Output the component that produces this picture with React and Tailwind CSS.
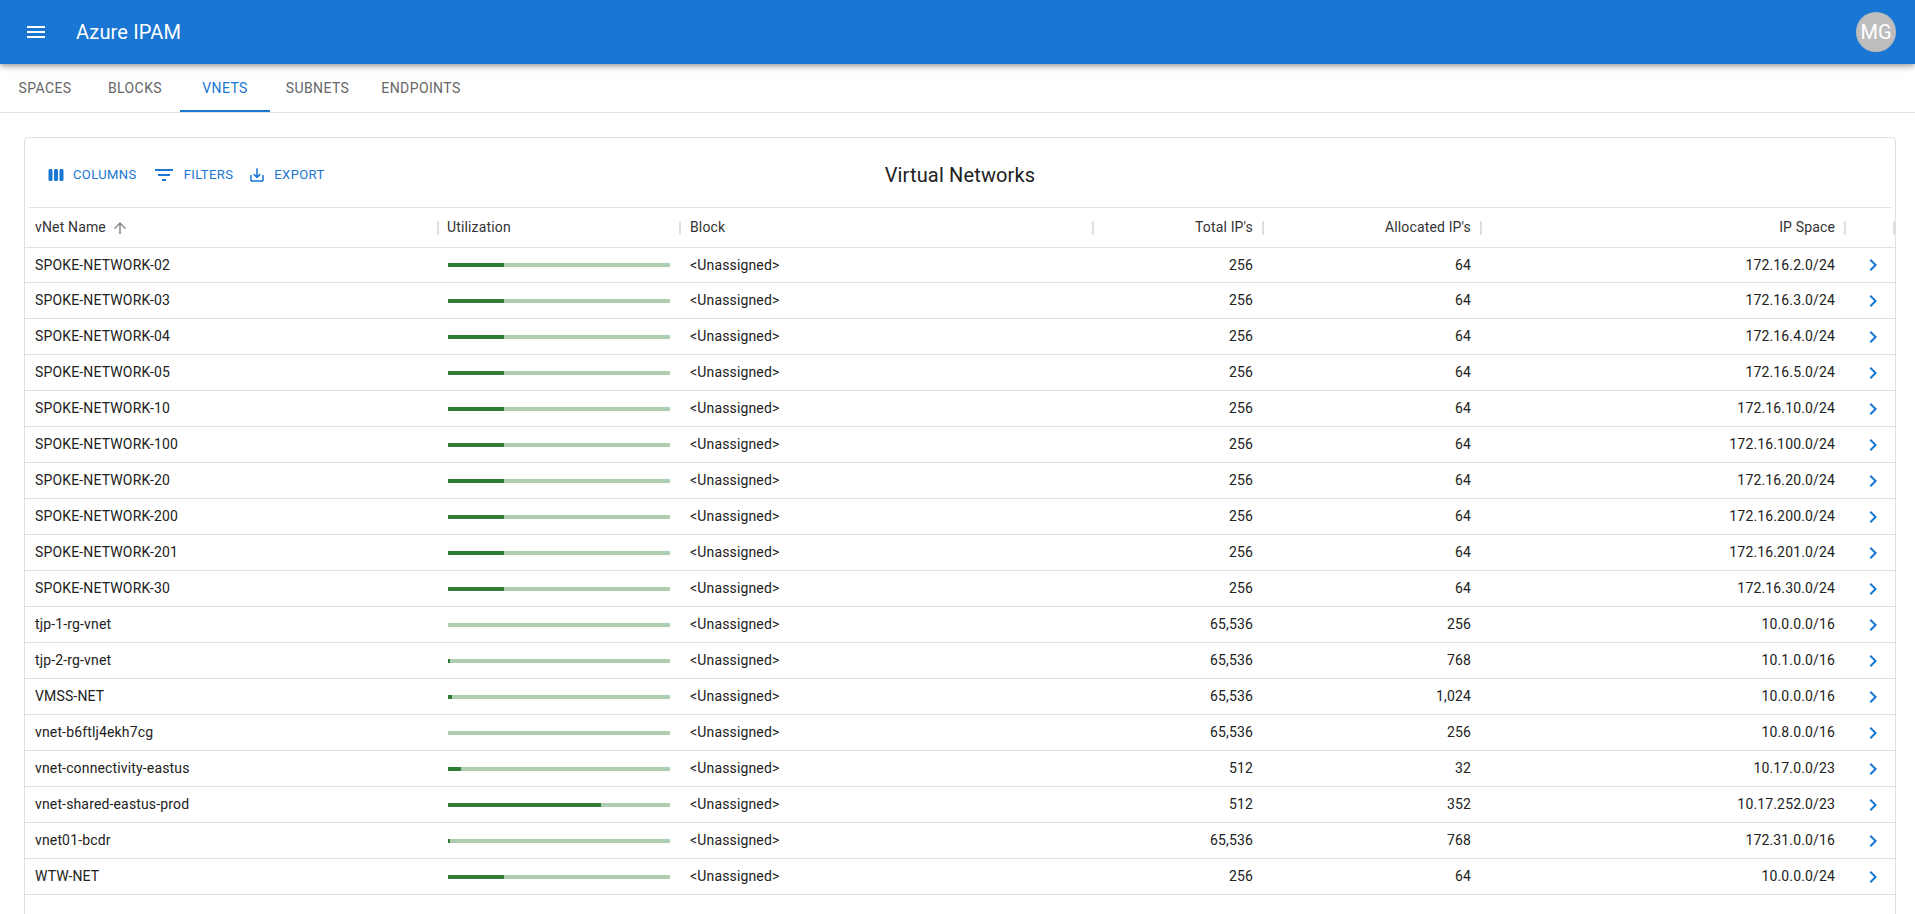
import React from "react";

const rows = [
  ["SPOKE-NETWORK-02", 256, 64, "172.16.2.0/24"],
  ["SPOKE-NETWORK-03", 256, 64, "172.16.3.0/24"],
  ["SPOKE-NETWORK-04", 256, 64, "172.16.4.0/24"],
  ["SPOKE-NETWORK-05", 256, 64, "172.16.5.0/24"],
  ["SPOKE-NETWORK-10", 256, 64, "172.16.10.0/24"],
  ["SPOKE-NETWORK-100", 256, 64, "172.16.100.0/24"],
  ["SPOKE-NETWORK-20", 256, 64, "172.16.20.0/24"],
  ["SPOKE-NETWORK-200", 256, 64, "172.16.200.0/24"],
  ["SPOKE-NETWORK-201", 256, 64, "172.16.201.0/24"],
  ["SPOKE-NETWORK-30", 256, 64, "172.16.30.0/24"],
  ["tjp-1-rg-vnet", 65536, 256, "10.0.0.0/16"],
  ["tjp-2-rg-vnet", 65536, 768, "10.1.0.0/16"],
  ["VMSS-NET", 65536, 1024, "10.0.0.0/16"],
  ["vnet-b6ftlj4ekh7cg", 65536, 256, "10.8.0.0/16"],
  ["vnet-connectivity-eastus", 512, 32, "10.17.0.0/23"],
  ["vnet-shared-eastus-prod", 512, 352, "10.17.252.0/23"],
  ["vnet01-bcdr", 65536, 768, "172.31.0.0/16"],
  ["WTW-NET", 256, 64, "10.0.0.0/24"],
];

const Ico = ({ d, size = 24, className = "" }) => (
  <svg width={size} height={size} viewBox="0 0 24 24" fill="currentColor" className={`shrink-0 ${className}`}>
    <path d={d} />
  </svg>
);

const Sep = () => <span className="w-[2px] h-[14px] bg-[#e0e0e0] shrink-0" />;

const tabs = [
  ["SPACES", "w-[90px]", false],
  ["BLOCKS", "w-[90px]", false],
  ["VNETS", "w-[90px]", true],
  ["SUBNETS", "w-[95px]", false],
  ["ENDPOINTS", "w-[112px]", false],
];

export default function App() {
  return (
    <div className="h-[914px] overflow-hidden bg-white text-[14px] tracking-[0.15px] text-[#212121] font-['Roboto',sans-serif]">
      <header className="relative z-10 h-16 bg-[#1976d2] text-white flex items-center pl-6 pr-[19px] shadow-[0_2px_4px_-1px_rgba(0,0,0,0.2),0_4px_5px_0_rgba(0,0,0,0.14),0_1px_10px_0_rgba(0,0,0,0.12)]">
        <Ico d="M3 18h18v-2H3v2zm0-5h18v-2H3v2zm0-7v2h18V6H3z" />
        <span className="ml-7 text-[20px] font-[450] leading-[32px] tracking-[0.15px]">Azure IPAM</span>
        <span className="ml-auto w-10 h-10 rounded-full bg-[#bdbdbd] flex items-center justify-center text-[20px] tracking-normal">MG</span>
      </header>

      <nav className="h-[49px] flex border-b border-[#e0e0e0]">
        {tabs.map(([t, w, active]) => (
          <div
            key={t}
            className={`${w} h-12 flex items-center justify-center text-[14px] font-[450] tracking-[0.4px] border-y-2 border-t-transparent ${
              active ? "text-[#1976d2] border-b-[#1976d2]" : "text-[#666666] border-b-transparent"
            }`}
          >
            {t}
          </div>
        ))}
      </nav>

      <section className="mt-6 ml-6 mr-[19px] h-[800px] border border-[#e0e0e0] rounded">
        <div className="mx-1 h-[70px] pt-[4px] border-b border-[#e0e0e0] flex items-center">
          <div className="flex-1 flex items-center text-[13px] font-[450] tracking-[0.4px] text-[#1976d2]">
            <Ico size={18} className="ml-[18px]" d="M5.33 20H4c-1.1 0-2-.9-2-2V6c0-1.1.9-2 2-2h1.33c1.1 0 2 .9 2 2v12c0 1.1-.9 2-2 2zM22 18V6c0-1.1-.9-2-2-2h-1.33c-1.1 0-2 .9-2 2v12c0 1.1.9 2 2 2H20c1.1 0 2-.9 2-2zm-7.33 0V6c0-1.1-.9-2-2-2h-1.33c-1.1 0-2 .9-2 2v12c0 1.1.9 2 2 2h1.33c1.1 0 2-.9 2-2z" />
            <span className="ml-2">COLUMNS</span>
            <Ico className="ml-[15px]" d="M10 18h4v-2h-4v2zM3 6v2h18V6H3zm3 7h12v-2H6v2z" />
            <span className="ml-2">FILTERS</span>
            <Ico size={18} className="ml-[15px]" d="M19 12v7H5v-7H3v7c0 1.1.9 2 2 2h14c1.1 0 2-.9 2-2v-7h-2zm-6 .67l2.59-2.58L17 11.5l-5 5-5-5 1.41-1.41L11 12.67V3h2z" />
            <span className="ml-2">EXPORT</span>
          </div>
          <h1 className="text-[20px] font-normal leading-8 tracking-[0.15px] text-[#212121]">Virtual Networks</h1>
          <div className="flex-1" />
        </div>

        <div className="h-10 flex items-center border-b border-[#e0e0e0] text-[#333333]">
          <div className="w-[414px] flex items-center justify-between pl-[10px]">
            <span className="flex items-center">
              vNet Name
              <Ico size={18} className="ml-[5px] text-[#888888]" d="M4 12l1.41 1.41L11 7.83V20h2V7.83l5.58 5.59L20 12l-8-8-8 8z" />
            </span>
            <Sep />
          </div>
          <div className="w-[242px] flex items-center justify-between pl-2">
            <span>Utilization</span>
            <Sep />
          </div>
          <div className="w-[413px] flex items-center justify-between pl-[9px]">
            <span>Block</span>
            <Sep />
          </div>
          <div className="w-[170px] flex items-center justify-end gap-[9px]">
            <span>Total IP's</span>
            <Sep />
          </div>
          <div className="w-[218px] flex items-center justify-end gap-[9px]">
            <span>Allocated IP's</span>
            <Sep />
          </div>
          <div className="w-[364px] flex items-center justify-end gap-[9px]">
            <span>IP Space</span>
            <Sep />
          </div>
          <div className="flex-1 flex justify-end">
            <Sep />
          </div>
        </div>

        {rows.map(([name, total, used, space], i) => (
          <div key={name} className={`${i === 0 ? "h-[35px]" : "h-9"} flex items-center border-b border-[#e0e0e0]`}>
            <div className="w-[414px] pl-[10px]">{name}</div>
            <div className="w-[242px] pl-[9px] pr-[11px]">
              <div className="h-1 bg-[#aecdb0]">
                <div className="h-full bg-[#2e7d32]" style={{ width: `${Math.round((used / total) * 100)}%` }} />
              </div>
            </div>
            <div className="w-[413px] pl-[9px]">&lt;Unassigned&gt;</div>
            <div className="w-[170px] text-right pr-[11px]">{total.toLocaleString("en-US")}</div>
            <div className="w-[218px] text-right pr-[11px]">{used.toLocaleString("en-US")}</div>
            <div className="w-[364px] text-right pr-[11px]">{space}</div>
            <div className="flex-1 flex justify-center pl-[5px] text-[#1976d2]">
              <Ico d="M10 6 8.59 7.41 13.17 12l-4.58 4.59L10 18l6-6z" />
            </div>
          </div>
        ))}
      </section>
    </div>
  );
}
